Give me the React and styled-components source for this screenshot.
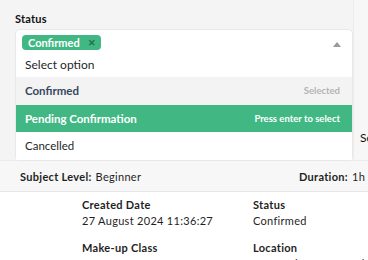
import React from "react"
import styled, { createGlobalStyle } from "styled-components"

const GlobalStyle = createGlobalStyle`
  html, body {
    margin: 0;
    padding: 0;
    background: #f4f4f4;
    font-family: "Lato", "Open Sans", sans-serif;
    color: #1f1f1f;
  }
  * { box-sizing: border-box; }
`

const Page = styled.div`
  width: 368px;
  height: 260px;
  overflow: hidden;
`

const Top = styled.section`
  display: grid;
  grid-template-columns: 338px 1fr;
  height: 160px;
  padding-left: 15px;
`

const Field = styled.div`
  position: relative;
  padding-top: 12px;
`

const Label = styled.div`
  font-size: 11px;
  line-height: 13px;
  font-weight: 700;
  color: #111;
  margin-bottom: 4px;
  letter-spacing: 0.2px;
`

const Select = styled.div`
  position: relative;
  display: flex;
  flex-direction: column;
  align-items: flex-start;
  height: 48px;
  background: #fff;
  border: 1px solid #e8e8e8;
  border-bottom: none;
  border-radius: 5px 5px 0 0;
  padding: 5px 6px 0;
`

const Tag = styled.span`
  display: inline-flex;
  align-items: center;
  gap: 8px;
  height: 15px;
  padding: 0 5px 0 6px;
  background: #41b883;
  color: #fff;
  font-size: 11px;
  font-weight: 700;
  border-radius: 4px;
`

const TagX = styled.span`
  color: #266d4d;
  font-size: 9px;
  font-weight: 700;
`

const Placeholder = styled.div`
  font-size: 12px;
  line-height: 15px;
  color: #1f1f1f;
  margin: 7px 0 0 3px;
`

const Caret = styled.span`
  position: absolute;
  right: 11px;
  top: 12px;
  width: 0;
  height: 0;
  border-left: 4px solid transparent;
  border-right: 4px solid transparent;
  border-bottom: 5px solid #999;
`

const Menu = styled.ul`
  position: absolute;
  left: 0;
  right: 0;
  top: 77px;
  margin: 0;
  padding: 0;
  list-style: none;
  background: #fff;
  border: 1px solid #e8e8e8;
  border-top: none;
  border-radius: 0 0 5px 5px;
  z-index: 2;
`

const Option = styled.li`
  display: flex;
  align-items: center;
  justify-content: space-between;
  height: 27.5px;
  padding: 0 12px 0 9px;
  font-size: 11.5px;
  font-weight: ${(p) => (p.selected || p.highlight ? 700 : 400)};
  background: ${(p) => (p.highlight ? "#41b883" : p.selected ? "#f3f3f3" : "#fff")};
  color: ${(p) => (p.highlight ? "#fff" : p.selected ? "#35495e" : "#1f1f1f")};
`

const Hint = styled.span`
  font-size: 9.5px;
  font-weight: 700;
  color: ${(p) => (p.light ? "#fff" : "#b3b3b3")};
`

const Side = styled.div`
  border-left: 1px solid #ececec;
  background: #f7f7f7;
  padding: 130px 0 0 6px;
  font-size: 12px;
  color: #111;
  white-space: nowrap;
`

const InfoRow = styled.div`
  display: flex;
  justify-content: space-between;
  align-items: center;
  width: 432px;
  height: 32px;
  padding: 0 16px 0 20px;
  border-top: 1px solid #ececec;
  border-bottom: 1px solid #e6e6e6;
  background: #f7f7f7;
  font-size: 11px;
  letter-spacing: 0.3px;
  white-space: nowrap;
`

const Key = styled.b`
  font-weight: 700;
  margin-right: 4px;
`

const Details = styled.div`
  background: #fff;
  display: grid;
  grid-template-columns: 171px 1fr;
  row-gap: 14px;
  padding: 6px 0 0 82px;
  height: 68px;
`

const Item = styled.div`
  font-size: 11px;
  line-height: 13px;
  letter-spacing: 0.3px;
  white-space: nowrap;
`

const ItemTitle = styled.div`
  font-weight: 700;
  margin-bottom: 3px;
`

const details = [
  ["Created Date", "27 August 2024 11:36:27"],
  ["Status", "Confirmed"],
  ["Make-up Class", "None"],
  ["Location", "123 Paul Wu Street Shop 4"],
]

const App = () => {
  return (
    <Page>
      <GlobalStyle />
      <Top>
        <Field>
          <Label>Status</Label>
          <Select>
            <Tag>
              Confirmed <TagX>✕</TagX>
            </Tag>
            <Placeholder>Select option</Placeholder>
            <Caret />
          </Select>
          <Menu>
            <Option selected>
              Confirmed <Hint>Selected</Hint>
            </Option>
            <Option highlight>
              Pending Confirmation <Hint light>Press enter to select</Hint>
            </Option>
            <Option>Cancelled</Option>
          </Menu>
        </Field>
        <Side>Schedule</Side>
      </Top>
      <InfoRow>
        <span>
          <Key>Subject Level:</Key>Beginner
        </span>
        <span>
          <Key>Duration:</Key>1h - 60 mins
        </span>
      </InfoRow>
      <Details>
        {details.map(([title, value]) => (
          <Item key={title}>
            <ItemTitle>{title}</ItemTitle>
            {value}
          </Item>
        ))}
      </Details>
    </Page>
  )
}

export default App
